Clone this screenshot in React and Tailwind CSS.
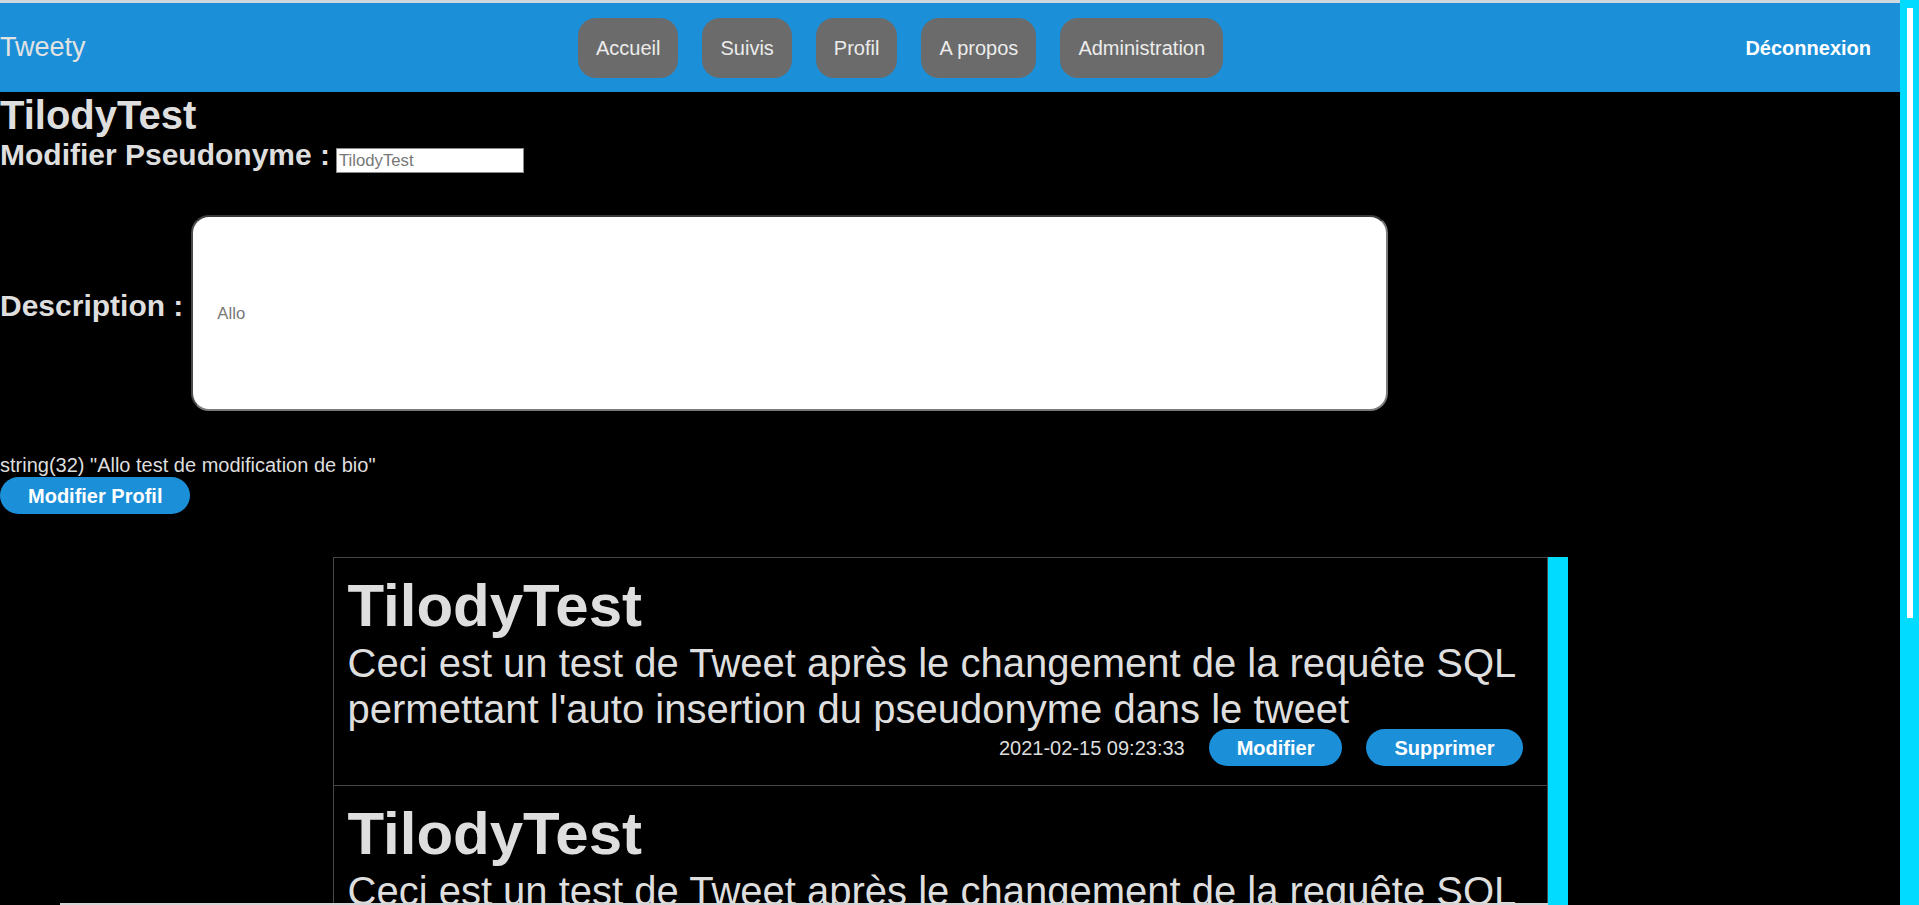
import React from "react";

const navLinks = ["Accueil", "Suivis", "Profil", "A propos", "Administration"];

const tweets = [
  {
    id: 1,
    author: "TilodyTest",
    text: "Ceci est un test de Tweet après le changement de la requête SQL permettant l'auto insertion du pseudonyme dans le tweet",
    date: "2021-02-15 09:23:33",
  },
  {
    id: 2,
    author: "TilodyTest",
    text: "Ceci est un test de Tweet après le changement de la requête SQL permettant l'auto insertion du pseudonyme dans le tweet",
    date: "2021-02-15 09:23:33",
  },
];

const Header = () => (
  <header className="flex items-center h-[89px] bg-[#1c8fd9]">
    {/* Logo */}
    <div className="w-[578px] text-[27px] text-[#e2e2e2]">Tweety</div>
    {/* Navigation */}
    <nav className="flex gap-[24px]">
      {navLinks.map((link) => (
        <a
          key={link}
          href="#"
          className="flex items-center h-[60px] px-[18px] rounded-[18px] bg-[#6b6b6b] text-[20px] text-[#ececec]"
        >
          {link}
        </a>
      ))}
    </nav>
    <a href="#" className="ml-auto mr-[29px] text-[20px] font-bold text-white">
      Déconnexion
    </a>
  </header>
);

const Tweet = ({ tweet }) => (
  <div className="pl-[14px] pr-[10px] pt-[13px] pb-[19px] border-b border-[#474747]">
    <h2 className="text-[60px] font-bold leading-[1.15] text-[#dedede]">{tweet.author}</h2>
    <p className="text-[40px] leading-[1.15] text-[#dedede]">{tweet.text}</p>
    <div className="flex justify-end items-center gap-[24px] mr-[14px] -mt-[3px]">
      <span className="text-[20px] text-[#dedede]">{tweet.date}</span>
      <button className="h-[37px] px-[28px] rounded-full bg-[#1c8fd9] text-white font-bold text-[20px]">
        Modifier
      </button>
      <button className="h-[37px] px-[28px] rounded-full bg-[#1c8fd9] text-white font-bold text-[20px]">
        Supprimer
      </button>
    </div>
  </div>
);

export default function App() {
  return (
    <div
      className="relative flex h-[905px] overflow-hidden bg-black"
      style={{ fontFamily: '"Liberation Sans", Arial, sans-serif' }}
    >
      <div className="w-[1900px] shrink-0">
        {/* thin strip above the header */}
        <div className="h-[3px] bg-[#cfd8de]" />
        <Header />

        {/* Profile edit */}
        <section className="text-[#dedede]">
          <h1 className="text-[40px] font-bold leading-[1.15]">TilodyTest</h1>
          <div className="flex items-start">
            <h2 className="text-[30px] font-bold leading-[1.15]">Modifier Pseudonyme :</h2>
            <input
              type="text"
              defaultValue="TilodyTest"
              className="ml-[6px] mt-[10px] w-[188px] h-[25px] px-[2px] bg-white border border-[#8a8a8a] text-[16.7px] text-[#777]"
            />
          </div>

          <div className="flex items-center gap-[8px] mt-[42px]">
            <h2 className="mb-[14px] text-[30px] font-bold leading-[1.15]">Description :</h2>
            <textarea
              defaultValue="Allo"
              className="w-[1197px] h-[196px] pt-[84px] px-[24px] resize-none rounded-[18px] bg-white border-2 border-[#7a7a7a] border-t-[#3a3a3a] border-l-[#4a4a4a] text-[16.7px] text-[#777] outline-none"
            />
          </div>

          <p className="mt-[43px] text-[20px] leading-[1.15]">
            string(32) "Allo test de modification de bio"
          </p>
          <button className="h-[37px] px-[28px] rounded-full bg-[#1c8fd9] text-white font-bold text-[20px]">
            Modifier Profil
          </button>
        </section>

        {/* Tweets list */}
        <div className="flex w-[1235px] mx-auto mt-[43px]">
          <div className="flex-1 border border-b-0 border-[#474747]">
            {tweets.map((tweet) => (
              <Tweet key={tweet.id} tweet={tweet} />
            ))}
          </div>
          <div className="w-[20px] bg-[#00dbff]" />
        </div>
      </div>

      {/* page scrollbar */}
      <div className="flex-1 bg-[#00dbff] pt-[8px]">
        <div className="ml-[7px] w-[6px] h-[610px] bg-white" />
      </div>

      {/* bottom scrollbar thumb */}
      <div className="absolute bottom-0 left-[60px] w-[1488px] h-[2px] bg-[#d4d4d4]" />
    </div>
  );
}
